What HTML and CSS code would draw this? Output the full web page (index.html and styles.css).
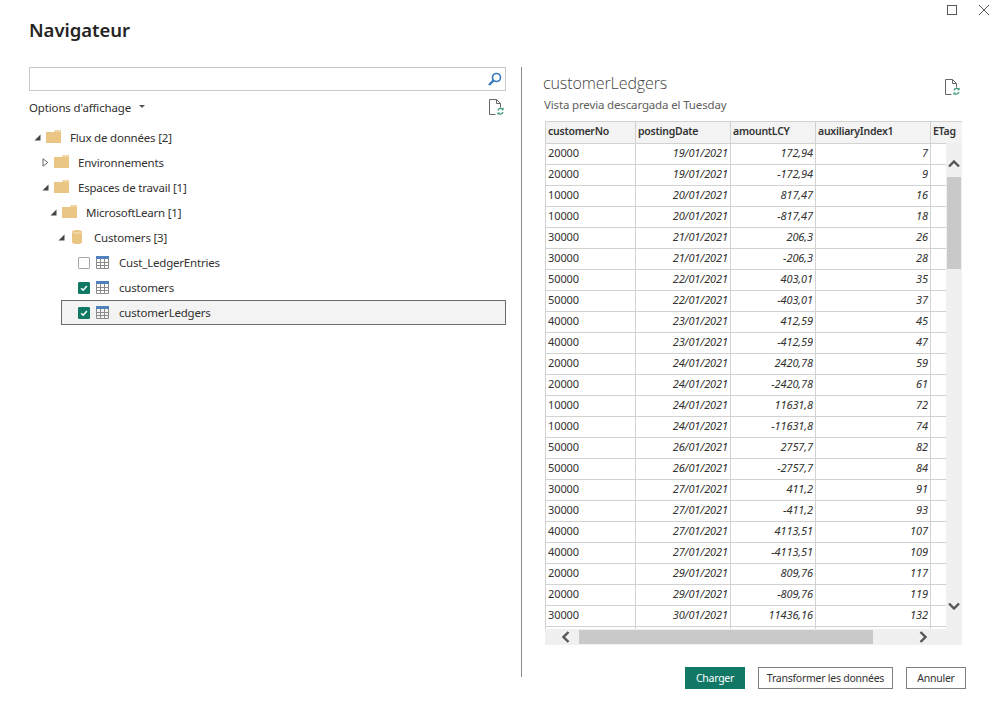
FILE: index.html
```html
<!DOCTYPE html>
<html lang="fr">
<head>
<meta charset="utf-8">
<title>Navigateur</title>
<link rel="stylesheet" href="styles.css">
</head>
<body>
<svg class="defs" width="0" height="0" aria-hidden="true">
  <symbol id="folder" viewBox="0 0 15 13"><path d="M0 2h8.5V.5L10 0h4.4l.6.5V13H0z" fill="#eac584"/><path d="M9.6 1h5" stroke="#f6e6c6" fill="none"/></symbol>
  <symbol id="table" viewBox="0 0 13 13"><path d="M0 0h13v3H0z" fill="#4f81bd"/><path d="M.5 3v9.5h12V3M4.5 3v9.5M8.5 3v9.5M.5 6.5h12M.5 9.5h12" fill="none" stroke="#8a8a8a"/></symbol>
  <symbol id="refresh" viewBox="0 0 15 17"><path d="M6.5 15.5H.5V.5h7l4 4v4M7.5.5v4h4" fill="none" stroke="#666"/><path d="M9 11.5a3 3 0 0 1 5-1.2M14 13a3 3 0 0 1-5 1.2" fill="none" stroke="#3f9b78" stroke-width="1.3"/><path d="M14.6 8.6v2.6H12zM8.4 16v-2.6H11z" fill="#3f9b78"/></symbol>
  <symbol id="arrow-open" viewBox="0 0 7 7"><path d="M6.5.5v6h-6z" fill="#444"/></symbol>
</svg>
<main class="dialog">
  <div class="win-controls">
    <svg class="win-icon" viewBox="0 0 10 10"><rect x=".5" y=".5" width="9" height="9" fill="none" stroke="#555"/></svg>
    <svg class="win-icon" viewBox="0 0 10 10"><path d="M0 0l10 10M10 0L0 10" fill="none" stroke="#555"/></svg>
  </div>
  <h1 class="title">Navigateur</h1>
  <div class="panes">
    <section class="left">
      <div class="search">
        <svg class="search-icon" viewBox="0 0 14 14"><circle cx="8.5" cy="5.5" r="4" fill="none" stroke="#3a7cbd" stroke-width="1.7"/><path d="M5.6 8.4L1 13" stroke="#3a7cbd" stroke-width="2.4"/></svg>
      </div>
      <div class="options">
        <span class="options-label">Options d'affichage</span>
        <span class="caret"></span>
        <svg class="refresh refresh-left"><use href="#refresh"/></svg>
      </div>
      <ul class="tree">
        <li class="node l0"><svg class="arrow"><use href="#arrow-open"/></svg><svg class="folder"><use href="#folder"/></svg><span>Flux de données [2]</span></li>
        <li class="node l1"><svg class="arrow" viewBox="0 0 7 9"><path d="M1 .8v7.4L5.8 4.5z" fill="#fff" stroke="#666"/></svg><svg class="folder"><use href="#folder"/></svg><span>Environnements</span></li>
        <li class="node l1"><svg class="arrow"><use href="#arrow-open"/></svg><svg class="folder"><use href="#folder"/></svg><span>Espaces de travail [1]</span></li>
        <li class="node l2"><svg class="arrow"><use href="#arrow-open"/></svg><svg class="folder"><use href="#folder"/></svg><span>MicrosoftLearn [1]</span></li>
        <li class="node l3"><svg class="arrow"><use href="#arrow-open"/></svg><svg class="db" viewBox="0 0 10 14"><path d="M0 2a5 2 0 0 1 10 0v10a5 2 0 0 1-10 0z" fill="#eac584"/><path d="M1 2.5q4 1.5 8 0" stroke="#f6e6c6" fill="none"/></svg><span>Customers [3]</span></li>
        <li class="node leaf"><span class="check"></span><svg class="table-icon"><use href="#table"/></svg><span>Cust_LedgerEntries</span></li>
        <li class="node leaf"><span class="check on"><svg viewBox="0 0 12 12"><path d="M2.5 6.3l2.5 2.4 4.5-5" fill="none" stroke="#fff" stroke-width="1.8"/></svg></span><svg class="table-icon"><use href="#table"/></svg><span>customers</span></li>
        <li class="node leaf selected"><span class="check on"><svg viewBox="0 0 12 12"><path d="M2.5 6.3l2.5 2.4 4.5-5" fill="none" stroke="#fff" stroke-width="1.8"/></svg></span><svg class="table-icon"><use href="#table"/></svg><span>customerLedgers</span></li>
      </ul>
    </section>
    <section class="right">
      <div class="preview-head">
        <div>
          <h2 class="preview-title">customerLedgers</h2>
          <p class="preview-sub">Vista previa descargada el Tuesday</p>
        </div>
        <svg class="refresh"><use href="#refresh"/></svg>
      </div>
      <div class="grid-wrap">
        <table class="grid">
          <colgroup><col class="c1"><col class="c2"><col class="c3"><col class="c4"><col class="c5"></colgroup>
          <thead><tr><th>customerNo</th><th>postingDate</th><th>amountLCY</th><th>auxiliaryIndex1</th><th>ETag</th></tr></thead>
          <tbody>
            <tr><td>20000</td><td>19/01/2021</td><td>172,94</td><td>7</td><td></td></tr>
            <tr><td>20000</td><td>19/01/2021</td><td>-172,94</td><td>9</td><td></td></tr>
            <tr><td>10000</td><td>20/01/2021</td><td>817,47</td><td>16</td><td></td></tr>
            <tr><td>10000</td><td>20/01/2021</td><td>-817,47</td><td>18</td><td></td></tr>
            <tr><td>30000</td><td>21/01/2021</td><td>206,3</td><td>26</td><td></td></tr>
            <tr><td>30000</td><td>21/01/2021</td><td>-206,3</td><td>28</td><td></td></tr>
            <tr><td>50000</td><td>22/01/2021</td><td>403,01</td><td>35</td><td></td></tr>
            <tr><td>50000</td><td>22/01/2021</td><td>-403,01</td><td>37</td><td></td></tr>
            <tr><td>40000</td><td>23/01/2021</td><td>412,59</td><td>45</td><td></td></tr>
            <tr><td>40000</td><td>23/01/2021</td><td>-412,59</td><td>47</td><td></td></tr>
            <tr><td>20000</td><td>24/01/2021</td><td>2420,78</td><td>59</td><td></td></tr>
            <tr><td>20000</td><td>24/01/2021</td><td>-2420,78</td><td>61</td><td></td></tr>
            <tr><td>10000</td><td>24/01/2021</td><td>11631,8</td><td>72</td><td></td></tr>
            <tr><td>10000</td><td>24/01/2021</td><td>-11631,8</td><td>74</td><td></td></tr>
            <tr><td>50000</td><td>26/01/2021</td><td>2757,7</td><td>82</td><td></td></tr>
            <tr><td>50000</td><td>26/01/2021</td><td>-2757,7</td><td>84</td><td></td></tr>
            <tr><td>30000</td><td>27/01/2021</td><td>411,2</td><td>91</td><td></td></tr>
            <tr><td>30000</td><td>27/01/2021</td><td>-411,2</td><td>93</td><td></td></tr>
            <tr><td>40000</td><td>27/01/2021</td><td>4113,51</td><td>107</td><td></td></tr>
            <tr><td>40000</td><td>27/01/2021</td><td>-4113,51</td><td>109</td><td></td></tr>
            <tr><td>20000</td><td>29/01/2021</td><td>809,76</td><td>117</td><td></td></tr>
            <tr><td>20000</td><td>29/01/2021</td><td>-809,76</td><td>119</td><td></td></tr>
            <tr><td>30000</td><td>30/01/2021</td><td>11436,16</td><td>132</td><td></td></tr>
            <tr><td></td><td></td><td></td><td></td><td></td></tr>
          </tbody>
        </table>
        <div class="vscroll">
          <svg class="chev-v" viewBox="0 0 12 8"><path d="M1 6.5l5-5 5 5" fill="none" stroke="#555" stroke-width="2.4"/></svg>
          <div class="vthumb"></div>
          <svg class="chev-v chev-down" viewBox="0 0 12 8"><path d="M1 1.5l5 5 5-5" fill="none" stroke="#555" stroke-width="2.4"/></svg>
        </div>
        <div class="hscroll">
          <svg class="chev-h" viewBox="0 0 8 12"><path d="M6.5 1l-5 5 5 5" fill="none" stroke="#555" stroke-width="2.4"/></svg>
          <div class="hthumb"></div>
          <svg class="chev-h chev-right" viewBox="0 0 8 12"><path d="M1.5 1l5 5-5 5" fill="none" stroke="#555" stroke-width="2.4"/></svg>
        </div>
      </div>
    </section>
  </div>
  <footer class="actions">
    <button class="btn primary">Charger</button>
    <button class="btn wide">Transformer les données</button>
    <button class="btn">Annuler</button>
  </footer>
</main>
</body>
</html>
```

FILE: styles.css
```css
* { box-sizing: border-box; }
html, body { margin: 0; padding: 0; background: #fff; }
body { font-family: "Noto Sans", "Open Sans", sans-serif; font-size: 11.5px; letter-spacing: -.2px; color: #323130; }
.defs { position: absolute; }
.dialog { width: 998px; height: 701px; position: relative; padding: 18px 32px 0 29px; overflow: hidden; }
.win-controls { position: absolute; top: 5px; right: 9px; display: flex; gap: 22px; }
.win-icon { width: 10px; height: 10px; display: block; }
.title { margin: 0; font-size: 18.5px; line-height: 24px; font-weight: 600; letter-spacing: -.05px; color: #252423; }
.panes { display: flex; margin-top: 25px; height: 610px; }
.left { width: 477px; flex: none; }
.search { height: 24px; border: 1px solid #c8c8c8; display: flex; align-items: center; justify-content: flex-end; padding-right: 3px; }
.search-icon { width: 14px; height: 14px; }
.options { display: flex; align-items: center; height: 17px; margin-top: 8px; }
.options-label { font-size: 11.5px; line-height: 17px; letter-spacing: -.15px; }
.caret { width: 0; height: 0; margin-left: 8px; margin-top: -3px; border: 3px solid transparent; border-top: 3px solid #555; border-bottom: 0; }
.refresh { width: 15px; height: 17px; flex: none; }
.refresh-left { margin-left: auto; margin-right: 2px; }
.tree { list-style: none; margin: 9px 0 0; padding: 0; }
.node { height: 25px; display: flex; align-items: center; line-height: 17px; white-space: nowrap; }
.node > span:last-child { position: relative; top: -.5px; }
.l0 { padding-left: 5px; }
.l1 { padding-left: 13px; }
.l2 { padding-left: 21px; }
.l3 { padding-left: 29px; }
.arrow { width: 7px; height: 7px; flex: none; margin-right: 5px; }
.l1 .arrow[viewBox] { height: 9px; }
.folder { width: 15px; height: 13px; margin-right: 9px; flex: none; margin-top: -2px; }
.db { width: 10px; height: 14px; margin: -1px 12px 0 2px; flex: none; }
.leaf { padding-left: 49px; }
.check { width: 12px; height: 12px; border: 1px solid #a6a6a6; border-radius: 1px; margin-right: 6px; flex: none; display: block; }
.check.on { background: #117865; border-color: #117865; }
.check svg { display: block; width: 10px; height: 10px; }
.table-icon { width: 13px; height: 13px; margin-right: 10px; flex: none; }
.selected { margin-left: 32px; padding-left: 16px; height: 25px; background: #f3f3f3; border: 1px solid #6b6b6b; }
.right { margin-left: 15px; flex: 1; border-left: 1px solid #8a8a8a; padding-left: 21px; }
.preview-head { display: flex; justify-content: space-between; height: 54px; padding-right: 2px; }
.preview-title { margin: 5px 0 0; font-family: "Open Sans", sans-serif; font-size: 16px; line-height: 22px; font-weight: 300; letter-spacing: -.1px; color: #444; }
.preview-sub { margin: 3px 0 0 1px; font-size: 11.5px; line-height: 16px; letter-spacing: -.15px; color: #605e5c; }
.preview-head .refresh { margin: 12px 4px 0 0; }
.grid-wrap { position: relative; margin-left: 2px; width: 417px; height: 524px; overflow: hidden; }
.grid { border-collapse: collapse; table-layout: fixed; width: 417px; font-size: 11px; letter-spacing: -.1px; }
.c1 { width: 90px; } .c2 { width: 95px; } .c3 { width: 85px; } .c4 { width: 115px; } .c5 { width: 32px; }
.grid th { height: 22px; background: #f3f3f3; border: 1px solid #d2d2d2; font-weight: 600; text-align: left; padding: 0 2px 3px; color: #333; font-size: 10.5px; letter-spacing: -.25px; }
.grid td { height: 21px; border: 1px solid #d2d2d2; padding: 0 2px 3px; text-align: right; font-style: italic; }
.grid td:first-child { text-align: left; font-style: normal; }
.vscroll { position: absolute; top: 22px; right: 0; bottom: 16px; width: 16px; background: #f0f0f0; }
.chev-v { position: absolute; left: 2px; top: 17px; width: 12px; height: 8px; }
.chev-down { top: 459px; }
.vthumb { position: absolute; top: 34px; left: 1px; width: 14px; height: 92px; background: #c9c9c9; }
.hscroll { position: absolute; left: 0; right: 0; bottom: 0; height: 16px; background: #f0f0f0; }
.hthumb { position: absolute; left: 34px; top: 1px; width: 294px; height: 14px; background: #c9c9c9; }
.chev-h { position: absolute; left: 17px; top: 2px; width: 8px; height: 12px; }
.chev-right { left: 374px; }
.actions { position: absolute; top: 667px; right: 32px; display: flex; gap: 13px; }
.btn { height: 22px; width: 60px; border: 1px solid #7f7f7f; background: #fff; font: inherit; font-size: 10.5px; letter-spacing: -.25px; color: #333; padding: 0; }
.btn.wide { width: 135px; }
.btn.primary { background: #117865; border-color: #117865; color: #fff; }
```
